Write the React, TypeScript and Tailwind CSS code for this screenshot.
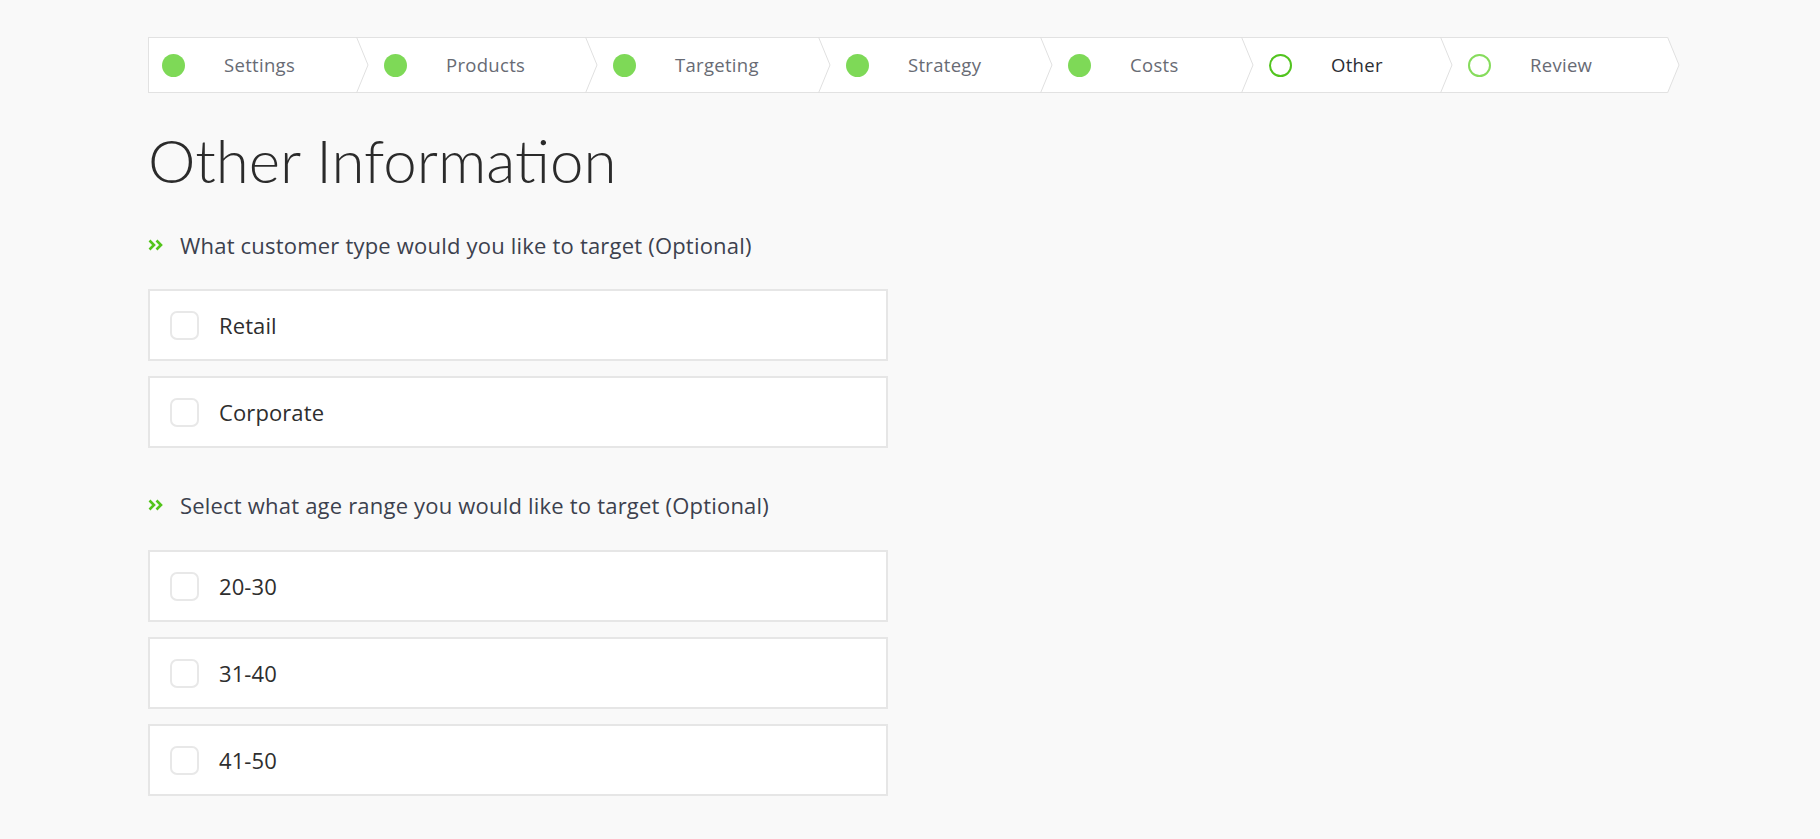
import React from 'react';

type Step = { label: string; width: string; state: 'done' | 'current' | 'todo' };

const steps: Step[] = [
  { label: 'Settings', width: 'w-[207px]', state: 'done' },
  { label: 'Products', width: 'w-[229px]', state: 'done' },
  { label: 'Targeting', width: 'w-[233px]', state: 'done' },
  { label: 'Strategy', width: 'w-[222px]', state: 'done' },
  { label: 'Costs', width: 'w-[201px]', state: 'done' },
  { label: 'Other', width: 'w-[199px]', state: 'current' },
  { label: 'Review', width: 'w-[227px]', state: 'todo' },
];

const Dot: React.FC<{ state: Step['state'] }> = ({ state }) => {
  if (state === 'done') return <div className="w-[23px] h-[23px] rounded-full bg-[#7ed957] flex-none" />;
  if (state === 'current')
    return <div className="w-[23px] h-[23px] rounded-full border-2 border-[#52c41f] flex-none" />;
  return <div className="w-[23px] h-[23px] rounded-full border-2 border-[#86dc5c] flex-none" />;
};

const Stepper = () => (
  <div className="flex h-[56px] w-fit border-y border-l border-[#e2e2e2] bg-white">
    {steps.map((s, i) => {
      const last = i === steps.length - 1;
      return (
        <div
          key={s.label}
          className={`relative flex items-center flex-none ${s.width} ${i === 0 ? 'pl-[13px]' : 'pl-[28px]'}`}
        >
          <Dot state={s.state} />
          <span
            className={`ml-[39px] text-[18.5px] tracking-[0.3px] ${
              s.state === 'current' ? 'text-[#2b2e35]' : 'text-[#686b74]'
            }`}
          >
            {s.label}
          </span>
          {/* chevron divider */}
          <svg className="absolute left-full -top-px z-10" width="13" height="56" viewBox="0 0 13 56">
            {last && <polygon points="0,0 12,28 0,56" fill="#ffffff" />}
            <polyline points="0.5,0 12,28 0.5,56" fill="none" stroke="#e0e0e0" strokeWidth="1" />
          </svg>
        </div>
      );
    })}
  </div>
);

const Arrows = () => (
  <svg width="15" height="12" viewBox="0 0 15 12" className="flex-none">
    <polyline points="1.5,1.5 6,6 1.5,10.5" fill="none" stroke="#52c41a" strokeWidth="2.6" />
    <polyline points="8.5,1.5 13,6 8.5,10.5" fill="none" stroke="#52c41a" strokeWidth="2.6" />
  </svg>
);

const Question: React.FC<{ text: string; className?: string }> = ({ text, className }) => (
  <div className={`flex items-center h-[28px] ${className ?? ''}`}>
    <Arrows />
    <span className="ml-[17px] text-[22px] tracking-[0.2px] text-[#3c414e]">{text}</span>
  </div>
);

const Option: React.FC<{ label: string }> = ({ label }) => (
  <label className="flex items-center h-[72px] w-[740px] border-2 border-[#e6e6e6] bg-white pl-[20px] cursor-pointer">
    <span className="w-[29px] h-[29px] rounded-[7px] border-2 border-[#e8e8e8] bg-white flex-none" />
    <span className="ml-[20px] text-[22px] tracking-[0.1px] text-[#2e2e2e]">{label}</span>
  </label>
);

export default function App() {
  return (
    <div
      className="min-h-screen bg-[#f9f9f9] pl-[148px] pt-[37px] pb-10"
      style={{ fontFamily: '"Open Sans", Lato, sans-serif' }}
    >
      <Stepper />
      <h1
        className="mt-[37px] text-[60px] leading-none font-light text-[#2b2b2b]"
        style={{ fontFamily: 'Lato, "Open Sans", sans-serif' }}
      >
        Other Information
      </h1>

      <Question className="mt-[41px]" text="What customer type would you like to target (Optional)" />
      <div className="mt-[30px] flex flex-col gap-[15px]">
        <Option label="Retail" />
        <Option label="Corporate" />
      </div>

      <Question className="mt-[43px]" text="Select what age range you would like to target (Optional)" />
      <div className="mt-[31px] flex flex-col gap-[15px]">
        <Option label="20-30" />
        <Option label="31-40" />
        <Option label="41-50" />
      </div>
    </div>
  );
}
